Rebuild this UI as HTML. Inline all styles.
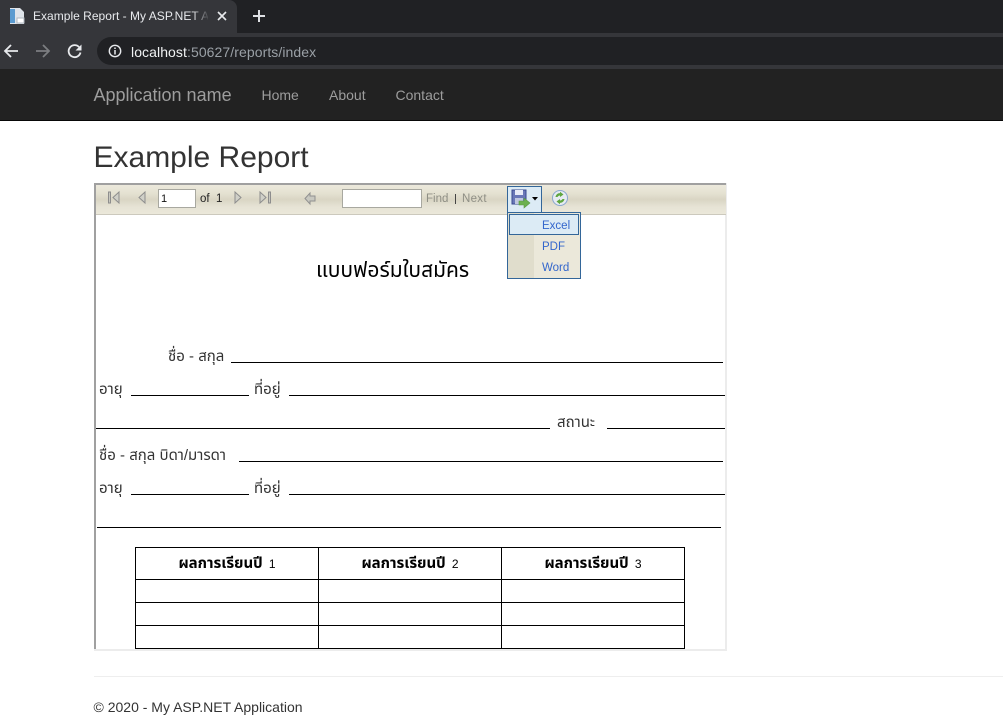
<!DOCTYPE html>
<html lang="th"><head><meta charset="utf-8"><title>Example Report - My ASP.NET Application</title>
<style>
html,body{margin:0;padding:0;background:#fff}
body{position:relative;width:1003px;height:719px;overflow:hidden;font-family:"Liberation Sans",sans-serif}
.a,.t,.l{position:absolute}
.t{white-space:nowrap}
.l{background:#000;height:1px}
.th{font-size:15px;color:#333;font-family:"Liberation Sans","Noto Sans Thai","Noto Sans CJK SC","DejaVu Sans",sans-serif}
.tb{font-size:11.5px;font-family:"Liberation Sans",sans-serif}
svg{position:absolute;overflow:visible}
td{border:1px solid #000;padding:0;text-align:center}
</style></head><body>
<div class="a" style="left:0;top:0;width:1003px;height:33px;background:#202124"></div>
<div class="a" style="left:0;top:0;width:237px;height:33px;background:#35363a;border-top-right-radius:8px"></div>
<div class="a" style="left:237px;top:33px;width:766px;height:4px;background:#35363a"></div>
<div class="a" style="left:0;top:33px;width:237px;height:4px;background:#35363a"></div>
<div class="a" style="left:0;top:37px;width:1003px;height:32px;background:#35363a"></div>
<div class="a" style="left:97px;top:37px;width:906px;height:28px;background:#202124;border-radius:14px 0 0 14px"></div>
<svg style="left:9px;top:8px" width="16" height="16"><path d="M1 0h10l4 4v12H1z" fill="#dfe4ea"/><path d="M1 1h5v14H1z" fill="#5b9bd0"/><path d="M8 10h7v5H8z" fill="#fff" stroke="#b0b8c0"/></svg>
<div class="t" style="left:33px;top:9px;font-size:12px;line-height:15px;color:#e8eaed;width:175px;overflow:hidden;letter-spacing:.02px">Example Report - My ASP.NET Application</div>
<div class="a" style="left:192px;top:5px;width:18px;height:22px;background:linear-gradient(90deg,rgba(53,54,58,0),#35363a)"></div>
<svg style="left:217px;top:11px" width="10" height="10"><path d="M1 1l8 8M9 1l-8 8" stroke="#e8eaed" stroke-width="1.6"/></svg>
<svg style="left:252px;top:9px" width="14" height="14"><path d="M7 1v12M1 7h12" stroke="#dfe1e5" stroke-width="2"/></svg>
<svg style="left:3px;top:43px" width="16" height="16"><path d="M15 8H2M8 2L2 8l6 6" fill="none" stroke="#e8eaed" stroke-width="1.8"/></svg>
<svg style="left:35px;top:43px" width="16" height="16"><path d="M1 8h13M8 2l6 6-6 6" fill="none" stroke="#7c7e81" stroke-width="1.8"/></svg>
<svg style="left:67px;top:43px" width="16" height="16"><path d="M13.5 9.5A6 6 0 1 1 12 4" fill="none" stroke="#e8eaed" stroke-width="1.8"/><path d="M14.500 1.500v6h-6z" fill="#e8eaed"/></svg>
<svg style="left:108px;top:44px" width="14" height="14"><circle cx="7" cy="7" r="5.700" fill="none" stroke="#e8eaed" stroke-width="1.400"/><path d="M7 6v4.500M7 3.500v1.500" stroke="#e8eaed" stroke-width="1.500"/></svg>
<div class="t" style="left:131px;top:44px;font-size:14px;letter-spacing:.08px;line-height:17px;color:#f1f3f4">localhost<span style="color:#9aa0a6">:50627/reports/index</span></div>
<div class="a" style="left:0;top:69px;width:1003px;height:51px;background:#222;border-bottom:1px solid #080808"></div>
<div class="t" style="left:93.500px;top:85px;font-size:18px;line-height:20px;color:#9d9d9d">Application name</div>
<div class="t" style="left:261.500px;top:87px;font-size:14px;line-height:16px;color:#9d9d9d">Home</div>
<div class="t" style="left:329px;top:87px;font-size:14px;line-height:16px;color:#9d9d9d">About</div>
<div class="t" style="left:395.500px;top:87px;font-size:14px;line-height:16px;color:#9d9d9d">Contact</div>
<div class="t" style="left:93.500px;top:141px;font-size:30px;line-height:33px;color:#333">Example Report</div>

<div class="a" style="left:94px;top:183px;width:633px;height:468px;background:#fff;box-sizing:border-box;border:2px solid #ececec;border-top:0;border-left:0"></div>
<div class="a" style="left:94px;top:183px;width:2px;height:466px;background:#a0a0a0"></div>
<div class="a" style="left:94px;top:183px;width:632px;height:2px;background:#a0a0a0"></div>
<div class="a" style="left:96px;top:185px;width:630px;height:30px;box-sizing:border-box;border-bottom:1px solid #ccc9bd;background:linear-gradient(#ece9dc 0,#e4e1d1 30%,#d9d5c4 50%,#e6e3d5 75%,#ebe8da 100%)"></div>

<svg style="left:107px;top:191px" width="13" height="14"><path d="M1.500 1h2v11h-2z" fill="#c8c8c0" stroke="#8d8d8d"/><path d="M12 1v11L6 6.500z" fill="#d0d0c8" stroke="#8d8d8d"/></svg>
<svg style="left:138px;top:191px" width="8" height="14"><path d="M7 1v11L1 6.500z" fill="#d0d0c8" stroke="#8d8d8d"/></svg>
<div class="a" style="left:158px;top:189px;width:38px;height:19px;box-sizing:border-box;border:1px solid #a8a8a0;background:#fff;font-size:11px;line-height:18px;padding-left:2px;color:#111">1</div>
<div class="t tb" style="left:200px;top:193px;line-height:13px;color:#222">of&nbsp; 1</div>
<svg style="left:234px;top:191px" width="8" height="14"><path d="M1 1v11l6-5.500z" fill="#d0d0c8" stroke="#8d8d8d"/></svg>
<svg style="left:259px;top:191px" width="13" height="14"><path d="M1 1v11l6-5.500z" fill="#d0d0c8" stroke="#8d8d8d"/><path d="M9.500 1h2v11h-2z" fill="#c8c8c0" stroke="#8d8d8d"/></svg>
<svg style="left:304px;top:192px" width="12" height="13"><path d="M6 1v3h5v5H6v3L1 6.500z" fill="#c8c8c0" stroke="#909090"/></svg>
<div class="a" style="left:342px;top:189px;width:80px;height:19px;box-sizing:border-box;border:1px solid #a8a8a0;background:#fff"></div>
<div class="t tb" style="left:426px;top:193px;line-height:13px;color:#8f8f85;font-weight:400">Find</div>
<div class="a" style="left:455px;top:194px;width:1px;height:10px;background:#444"></div>
<div class="t tb" style="left:462px;top:193px;line-height:13px;color:#8f8f85;letter-spacing:.3px">Next</div>

<div class="a" style="left:507px;top:186px;width:35px;height:27px;box-sizing:border-box;border:1px solid #336699;background:#dcebf5"></div>
<svg style="left:511px;top:189px" width="20" height="20"><path d="M1 1h14v14H1z" fill="#6a78b8" stroke="#3a4a90"/><path d="M4 1h8v5H4z" fill="#e8ecf8"/><path d="M4 9h8v6H4z" fill="#c0c8e0"/><path d="M8 12h5V9l6 5-6 5v-3H8z" fill="#6cb050" stroke="#5a9a42" stroke-width=".6"/></svg>
<svg style="left:532px;top:197px" width="6" height="4"><path d="M0 0h6L3 3.500z" fill="#000"/></svg>
<svg style="left:552px;top:190px" width="16" height="16"><circle cx="8" cy="8" r="7.500" fill="#e6ebf2" stroke="#8aa7cf"/><path d="M3.500 7C4 4.500 6 3 8 3.200V1.800L11.500 4.500 8 7V5.500C7 5.500 6 6 5.500 7z" fill="#5fa63f"/><path d="M12.500 9C12 11.500 10 13 8 12.800v1.400L4.500 11.500 8 9v1.500C9 10.500 10 10 10.500 9z" fill="#5fa63f"/></svg>

<div class="a" style="left:507px;top:212px;width:74px;height:67px;box-sizing:border-box;border:1px solid #336699;background:#ebe8da"></div>
<div class="a" style="left:508px;top:213px;width:26px;height:65px;background:#e0ddcc"></div>
<div class="a" style="left:509px;top:214px;width:70px;height:21px;box-sizing:border-box;border:1px solid #336699;background:#dcebf5"></div>
<div class="t tb" style="left:542px;top:220px;line-height:13px;color:#3366cc">Excel</div>
<div class="t tb" style="left:542px;top:241px;line-height:13px;color:#3366cc">PDF</div>
<div class="t tb" style="left:542px;top:262px;line-height:13px;color:#3366cc">Word</div>

<div class="t th" style="left:316px;top:259px;font-size:21px;line-height:24px;color:#000;font-weight:400">แบบฟอร์มใบสมัคร</div>
<div class="t th" style="left:168px;top:347px;line-height:20px">ชื่อ - สกุล</div>
<div class="l" style="left:231px;top:362px;width:492px"></div>
<div class="t th" style="left:99px;top:380px;line-height:20px">อายุ</div>
<div class="l" style="left:131px;top:395px;width:118px"></div>
<div class="t th" style="left:254px;top:380px;line-height:20px">ที่อยู่</div>
<div class="l" style="left:289px;top:395px;width:436px"></div>
<div class="l" style="left:96px;top:428px;width:454px"></div>
<div class="t th" style="left:557px;top:413px;line-height:20px">สถานะ</div>
<div class="l" style="left:607px;top:428px;width:118px"></div>
<div class="t th" style="left:99px;top:446px;line-height:20px">ชื่อ - สกุล บิดา/มารดา</div>
<div class="l" style="left:239px;top:461px;width:484px"></div>
<div class="t th" style="left:99px;top:479px;line-height:20px">อายุ</div>
<div class="l" style="left:131px;top:494px;width:118px"></div>
<div class="t th" style="left:254px;top:479px;line-height:20px">ที่อยู่</div>
<div class="l" style="left:289px;top:494px;width:436px"></div>
<div class="l" style="left:97px;top:527px;width:624px"></div>

<table class="a" style="left:135px;top:547px;width:550px;height:102px;border-collapse:collapse;table-layout:fixed">
<tr style="height:32px">
<td class="th" style="font-weight:700;color:#000">ผลการเรียนปี <span style="font-weight:400;font-size:12px;margin-left:2px">1</span></td>
<td class="th" style="font-weight:700;color:#000">ผลการเรียนปี <span style="font-weight:400;font-size:12px;margin-left:2px">2</span></td>
<td class="th" style="font-weight:700;color:#000">ผลการเรียนปี <span style="font-weight:400;font-size:12px;margin-left:2px">3</span></td></tr>
<tr style="height:23px"><td></td><td></td><td></td></tr>
<tr style="height:23px"><td></td><td></td><td></td></tr>
<tr style="height:23px"><td></td><td></td><td></td></tr>
</table>

<div class="a" style="left:94px;top:676px;width:909px;height:1px;background:#eee"></div>
<div class="t" style="left:93.500px;top:699px;font-size:14px;line-height:16px;color:#333">© 2020 - My ASP.NET Application</div>
</body></html>
